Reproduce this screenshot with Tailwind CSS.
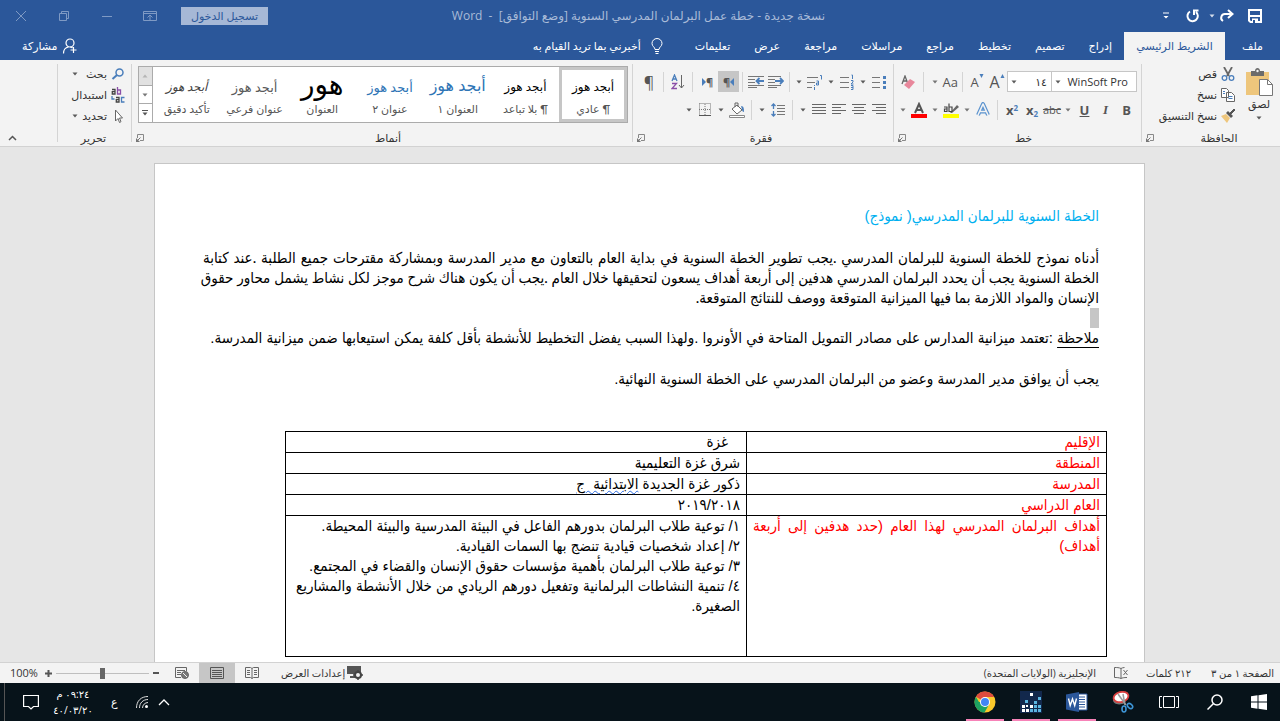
<!DOCTYPE html>
<html lang="ar" dir="rtl">
<head>
  <meta charset="UTF-8">
  <title>نسخة جديدة - Word</title>
  <script src="https://cdn.jsdelivr.net/npm/@tailwindcss/browser@4"></script>
</head>
<body class="h-screen flex flex-col overflow-hidden bg-[#e6e6e6] text-[#333] text-[11px] leading-4 font-['Open_Sans','DejaVu_Sans',sans-serif]">

  <!-- shared icons -->
  <svg class="hidden">
    <symbol id="caret" viewBox="0 0 6 4"><path d="M0.5 0.5h5L3 3.5z" fill="currentColor" opacity=".8"/></symbol>
    <symbol id="launcher" viewBox="0 0 8 8"><path d="M1.500 4V.5h6v6H4" fill="none" stroke="#888"/><path d="M0 4v4h4z" fill="#777"/><path d="M1.500 6.500l3-3" stroke="#777"/></symbol>
  </svg>

  <!-- Title bar -->
  <header class="bg-[#2b579a] text-white shrink-0">
    <div class="h-8 flex items-center">
      <div class="flex items-center flex-1 pr-[17px]">
        <button aria-label="حفظ"><svg class="w-4 h-4" viewBox="0 0 16 16"><path d="M2 2h12v12H3.500L2 12.500z" fill="none" stroke="#fff" stroke-width="2"/><path d="M2 8h12" stroke="#fff" stroke-width="2"/><path d="M5 10.500h6V15H5z" fill="#fff"/><path d="M6 12h2v3H6z" fill="#2b579a"/></svg></button>
        <button class="mr-3" aria-label="تكرار"><svg class="w-4 h-4" viewBox="0 0 16 16" fill="none" stroke="#fff" stroke-width="2"><path d="M13 6H6.500a3.800 3.800 0 0 0-2.500 7M9 2l4.500 4L9 10"/></svg></button>
        <button class="mr-1" aria-label="خيارات"><svg class="w-[6px] h-1"><use href="#caret"/></svg></button>
        <button class="mr-2" aria-label="تراجع"><svg class="w-4 h-4" viewBox="0 0 16 16" fill="none" stroke="#fff" stroke-width="2"><path d="M11 4a5.200 5.200 0 1 1-6-.5M13.500 2.500H9V7"/></svg></button>
        <button class="mr-4" aria-label="تخصيص"><svg class="w-[6px] h-2" viewBox="0 0 6 8"><path d="M0 1h6" stroke="#fff"/><path d="M.5 4h5L3 6.500z" fill="#fff"/></svg></button>
      </div>
      <h1 class="text-[#a9bbd8] text-xs whitespace-nowrap">نسخة جديدة - خطة عمل البرلمان المدرسي السنوية [وضع التوافق] &nbsp;- &nbsp;Word</h1>
      <div class="flex items-center justify-end flex-1 pl-[14px] text-[#7f9ac4]">
        <button class="bg-[#a6b8d6] text-[#2b579a] w-[87px] h-[18px] leading-4">تسجيل الدخول</button>
        <button class="mr-6" aria-label="خيارات عرض الشريط"><svg class="w-[14px] h-3" viewBox="0 0 14 12" fill="none" stroke="currentColor"><path d="M.5 1.500h13v9H.5zM.5 3.500h13M7 10V5M4.500 7.500L7 5l2.500 2.500"/></svg></button>
        <button class="mr-[29px]" aria-label="تصغير"><svg class="w-[14px] h-3" viewBox="0 0 14 12" stroke="currentColor"><path d="M2 6.500h10"/></svg></button>
        <button class="mr-[29px]" aria-label="استعادة"><svg class="w-[14px] h-3" viewBox="0 0 14 12" fill="none" stroke="currentColor"><path d="M2.500 3.500h7v7h-7zM4.500 3.500v-2h7v7h-2"/></svg></button>
        <button class="mr-[29px]" aria-label="إغلاق"><svg class="w-[14px] h-3" viewBox="0 0 14 12" stroke="currentColor"><path d="M2 1l10 10M12 1L2 11"/></svg></button>
      </div>
    </div>
    <nav class="h-7 flex items-stretch">
      <a href="#" class="w-[55px] flex items-center justify-center">ملف</a>
      <a href="#" class="w-[101px] flex items-center justify-center bg-[#f3f3f3] text-[#2b579a]">الشريط الرئيسي</a>
      <a href="#" class="px-3 flex items-center">إدراج</a>
      <a href="#" class="px-3 flex items-center">تصميم</a>
      <a href="#" class="px-3 flex items-center">تخطيط</a>
      <a href="#" class="px-3 flex items-center">مراجع</a>
      <a href="#" class="px-3 flex items-center">مراسلات</a>
      <a href="#" class="px-3 flex items-center">مراجعة</a>
      <a href="#" class="px-3 flex items-center">عرض</a>
      <a href="#" class="px-3 flex items-center">تعليمات</a>
      <button class="mr-5 flex items-center gap-[10px]">
        <svg class="w-3 h-4" viewBox="0 0 12 16" fill="none" stroke="#fff"><path d="M4 11.500C4 9 1 8.500 1 5.500a5 5 0 0 1 10 0c0 3-3 3.500-3 6zM4 13.500h4M4.500 15.500h3"/></svg>
        أخبرني بما تريد القيام به
      </button>
      <button class="mr-auto ml-[22px] flex items-center gap-1">
        <svg class="w-4 h-4" viewBox="0 0 16 16" fill="none" stroke="#fff" stroke-width="1.200"><circle cx="8" cy="5" r="4"/><path d="M1.500 15.500c0-3.500 2-6 5-6.500M8 9c1 0 2 .5 2.500 1M11.500 9v6M8.500 12h6"/></svg>
        مشاركة
      </button>
    </nav>
  </header>

  <!-- Ribbon -->
  <section class="h-[87px] shrink-0 flex bg-[#f3f3f3] border-b border-[#d2d2d2] pt-1 pb-1">
    <!-- Clipboard -->
    <div class="w-[139px] border-l border-[#d4d4d4] flex flex-col pr-[6px]">
      <div class="flex flex-1">
        <button class="flex flex-col items-center w-[30px] pt-1">
          <svg class="w-7 h-7 shrink-0" viewBox="0 0 28 28"><path d="M1 4h23v23H1z" fill="#eec67c"/><path d="M6 3h4c0-4 5-4 5 0h4v5H6z" fill="#6b6b6b"/><circle cx="12.500" cy="3" r="1.200" fill="#f3f3f3"/><path d="M14.500 11.500h8l5 5v11h-13z" fill="#fff" stroke="#777"/><path d="M22.500 11.500v5h5" fill="none" stroke="#777"/></svg>
          <span>لصق</span>
          <svg class="w-[6px] h-1 mt-1"><use href="#caret"/></svg>
        </button>
        <div class="flex flex-col gap-[5px] pt-[2px] mr-[9px]">
          <button class="flex items-center gap-1 h-4"><svg class="w-[14px] h-[14px] shrink-0" viewBox="0 0 14 14" fill="none"><path d="M3 0l5 9M11 0L6 9" stroke="#666" stroke-width="1.800"/><circle cx="3.500" cy="11" r="2.300" stroke="#4a7ebb" stroke-width="1.300"/><circle cx="10.500" cy="11" r="2.300" stroke="#4a7ebb" stroke-width="1.300"/></svg>قص</button>
          <button class="flex items-center gap-1 h-4"><svg class="w-[14px] h-[14px] shrink-0" viewBox="0 0 14 14" fill="#fff" stroke="#666"><path d="M.5.5h5l2 2v7h-7zM5.500 4.500h5l3 3v6h-8z"/><path d="M2 3.500h2M2 5.500h2M7.500 8.500h4M7.500 10.500h4" stroke="#4a7ebb"/></svg>نسخ</button>
          <button class="flex items-center gap-1 h-4 whitespace-nowrap"><svg class="w-[14px] h-[14px] shrink-0" viewBox="0 0 14 14"><path d="M0 7l5-2 4 4-3 5z" fill="#eec67c"/><path d="M5 4l5 5 2-2-5-5z" fill="#555"/><path d="M9 4l4-4 1 1-4 4z" fill="#555" stroke="#555"/></svg>نسخ التنسيق</button>
        </div>
      </div>
      <div class="relative flex justify-center h-4 -mb-1 pl-[22px]">الحافظة
        <svg class="absolute left-1 top-1 w-2 h-2"><use href="#launcher"/></svg></div>
    </div>

    <!-- Font -->
    <div class="w-[248px] border-l border-[#d4d4d4] flex flex-col pr-1">
      <div class="flex-1 flex flex-col gap-2 pt-[7px]">
        <div class="flex items-center h-[21px]">
          <label class="relative"><select aria-label="الخط" class="appearance-none block w-[86px] h-[21px] bg-white border border-[#c6c6c6] pr-2 text-[11px] leading-4"><option>WinSoft Pro</option></select><svg class="absolute left-1 top-[9px] w-[6px] h-1"><use href="#caret"/></svg></label>
          <label class="relative"><select aria-label="حجم الخط" class="appearance-none block w-[44px] h-[21px] bg-white border border-r-0 border-[#c6c6c6] pr-1 text-[11px] leading-4"><option>١٤</option></select><svg class="absolute left-1 top-[9px] w-[6px] h-1"><use href="#caret"/></svg></label>
          <button class="w-5 flex justify-center items-start text-base leading-4 text-[#555]" dir="ltr">A<svg class="w-[5px] h-1" viewBox="0 0 4 4"><path d="M0 4h4L2 0z" fill="#4a7ebb"/></svg></button>
          <button class="w-5 flex justify-center items-start text-[13px] leading-4 text-[#555]" dir="ltr">A<svg class="w-[5px] h-1" viewBox="0 0 4 4"><path d="M0 0h4L2 4z" fill="#4a7ebb"/></svg></button>
          <span class="w-px h-5 bg-[#d4d4d4] mx-1"></span>
          <button class="flex items-center gap-[5px] text-[13px] text-[#555]">Aa<svg class="w-[6px] h-1"><use href="#caret"/></svg></button>
          <span class="w-px h-5 bg-[#d4d4d4] mx-2"></span>
          <button aria-label="مسح التنسيق"><svg class="w-[14px] h-[14px]" viewBox="0 0 14 14"><path d="M1 9L4 1l3 8M2 6h4" fill="none" stroke="#666" stroke-width="1.300"/><path d="M3 10l6-6 5 3-6 7z" fill="#e8879b"/></svg></button>
        </div>
        <div class="flex items-center h-5 text-[13px] text-[#555]">
          <button class="w-[21px] font-bold">B</button>
          <button class="w-[21px] italic font-bold font-['Liberation_Serif',serif]">I</button>
          <button class="w-[21px] font-bold underline">U</button>
          <button class="w-3 flex justify-center" aria-label="تسطير"><svg class="w-[6px] h-1"><use href="#caret"/></svg></button>
          <button class="w-5 text-[11px] line-through">abc</button>
          <button class="w-5 font-bold" dir="ltr">x<sub class="text-[8px] text-[#4a7ebb]">2</sub></button>
          <button class="w-5 font-bold" dir="ltr">x<sup class="text-[8px] text-[#4a7ebb]">2</sup></button>
          <span class="w-px h-5 bg-[#d4d4d4] mx-1"></span>
          <button class="w-5 flex justify-center" aria-label="تأثيرات النص"><svg class="w-4 h-4" viewBox="0 0 16 16" fill="none" stroke-linejoin="round"><path d="M3 13L8 2l5 11M5 9.500h6" stroke="#5b93cf" stroke-width="4"/><path d="M3 13L8 2l5 11M5 9.500h6" stroke="#f3f3f3" stroke-width="1.600"/></svg></button>
          <button class="w-3 flex justify-center" aria-label="تأثيرات"><svg class="w-[6px] h-1"><use href="#caret"/></svg></button>
          <button class="w-5 flex justify-center" aria-label="تمييز"><svg class="w-4 h-4" viewBox="0 0 16 16"><path d="M0 12h16v4H0z" fill="#ff0"/><path d="M7 11l7-8 2 2-7 6z" fill="#666"/><path d="M1 5h3v4.500H1.500V7H4M6 1.500v8h3V5H6" fill="none" stroke="#444" stroke-width="1.200"/></svg></button>
          <button class="w-3 flex justify-center" aria-label="لون التمييز"><svg class="w-[6px] h-1"><use href="#caret"/></svg></button>
          <button class="w-5 flex justify-center" aria-label="لون الخط"><svg class="w-4 h-4" viewBox="0 0 16 16"><path d="M0 12h16v4H0z" fill="#f00"/><path d="M4 11l4-9 4 9M5.500 8h5" fill="none" stroke="#555" stroke-width="2"/></svg></button>
          <button class="w-3 flex justify-center" aria-label="ألوان الخط"><svg class="w-[6px] h-1"><use href="#caret"/></svg></button>
        </div>
      </div>
      <div class="relative flex justify-center h-4 -mb-1 pl-4">خط
        <svg class="absolute left-1 top-1 w-2 h-2"><use href="#launcher"/></svg></div>
    </div>

    <!-- Paragraph -->
    <div class="w-[261px] border-l border-[#d4d4d4] flex flex-col pr-1">
      <div class="flex-1 flex flex-col gap-2 pt-[7px]">
        <div class="flex items-center h-[21px]">
          <button class="w-5 flex justify-center" aria-label="تعداد نقطي"><svg class="w-[14px] h-[14px]" viewBox="0 0 14 14"><path d="M0 2.500h8M0 7.500h8M0 12.500h8" stroke="#777"/><path d="M11 1h3v3h-3zM11 6h3v3h-3zM11 11h3v3h-3z" fill="#4a7ebb"/></svg></button>
          <button class="w-3 flex justify-center" aria-label="نقاط"><svg class="w-[6px] h-1"><use href="#caret"/></svg></button>
          <button class="w-5 flex justify-center" aria-label="تعداد رقمي"><svg class="w-[14px] h-4" viewBox="0 0 14 16"><path d="M0 3.500h9M0 8.500h9M0 13.500h9" stroke="#777"/><path d="M11.500 1h1v4M11 6.500h2v1.500l-2 2h2.500M11 11.500h2v4h-2M11 13.500h2" stroke="#4a7ebb" fill="none"/></svg></button>
          <button class="w-3 flex justify-center" aria-label="أرقام"><svg class="w-[6px] h-1"><use href="#caret"/></svg></button>
          <button class="w-5 flex justify-center" aria-label="قائمة متعددة المستويات"><svg class="w-4 h-4" viewBox="0 0 16 16"><path d="M0 3.500h11M0 8.500h8M0 13.500h5" stroke="#777"/><path d="M13 1.500h1.500v4M9.500 7h2v4h-2V9h2M7.500 11v1M7.500 13v3" stroke="#4a7ebb" fill="none"/></svg></button>
          <button class="w-3 flex justify-center" aria-label="مستويات"><svg class="w-[6px] h-1"><use href="#caret"/></svg></button>
          <span class="w-px h-5 bg-[#d4d4d4] mx-[3px]"></span>
          <button class="w-5 flex justify-center" aria-label="زيادة المسافة"><svg class="w-4 h-3" viewBox="0 0 16 12"><path d="M0 .5h13M0 3.500h7M0 6.500h7M0 9.500h13M0 11.500h9" stroke="#777"/><path d="M7 5h8M12 2l3 3-3 3" stroke="#4a7ebb" stroke-width="1.800" fill="none"/></svg></button>
          <button class="w-5 flex justify-center" aria-label="إنقاص المسافة"><svg class="w-4 h-3" viewBox="0 0 16 12"><path d="M0 .5h16M0 3.500h7M0 6.500h7M0 9.500h16M0 11.500h9" stroke="#777"/><path d="M8 5h8M11.500 2l-3 3 3 3" stroke="#4a7ebb" stroke-width="1.800" fill="none"/></svg></button>
          <span class="w-px h-5 bg-[#d4d4d4] mx-[3px]"></span>
          <button class="w-[21px] h-[21px] bg-[#c6c6c6] flex justify-center items-center text-[#555] font-bold" aria-label="من اليمين إلى اليسار"><svg class="w-1 h-2" viewBox="0 0 4 8"><path d="M4 0v8L0 4z" fill="#4a7ebb"/></svg>¶</button>
          <button class="w-[21px] h-[21px] flex justify-center items-center text-[#555] font-bold" aria-label="من اليسار إلى اليمين">¶<svg class="w-1 h-2" viewBox="0 0 4 8"><path d="M0 0v8l4-4z" fill="#4a7ebb"/></svg></button>
          <span class="w-px h-5 bg-[#d4d4d4] mx-1"></span>
          <button class="w-5 flex justify-center" aria-label="فرز"><svg class="w-[14px] h-4" viewBox="0 0 14 16" fill="none"><path d="M1 7l2.500-6L6 7M2 5h3" stroke="#4a7ebb" stroke-width="1.300"/><path d="M1 9.500h4.500l-4.500 5h5" stroke="#8a4fa8" stroke-width="1.300"/><path d="M10.500 1v13M8 11l2.500 3 2.500-3" stroke="#666"/></svg></button>
          <span class="w-px h-5 bg-[#d4d4d4] mx-1"></span>
          <button class="w-5 text-base leading-4 text-[#555]">¶</button>
        </div>
        <div class="flex items-center h-5">
          <button class="w-5 flex justify-center" aria-label="محاذاة لليمين"><svg class="w-[14px] h-3" viewBox="0 0 14 12" stroke="#666"><path d="M0 .5h14M4 3.500h10M0 6.500h14M4 9.500h10"/></svg></button>
          <button class="w-5 flex justify-center" aria-label="توسيط"><svg class="w-[14px] h-3" viewBox="0 0 14 12" stroke="#666"><path d="M0 .5h14M2 3.500h10M0 6.500h14M2 9.500h10"/></svg></button>
          <button class="w-5 flex justify-center" aria-label="محاذاة لليسار"><svg class="w-[14px] h-3" viewBox="0 0 14 12" stroke="#666"><path d="M0 .5h14M0 3.500h9M0 6.500h14M0 9.500h9"/></svg></button>
          <button class="w-5 flex justify-center" aria-label="ضبط"><svg class="w-[14px] h-3" viewBox="0 0 14 12" stroke="#666"><path d="M0 .5h14M0 3.500h14M0 6.500h14M0 9.500h14"/></svg></button>
          <button class="w-3 flex justify-center" aria-label="ضبط النص"><svg class="w-[6px] h-1"><use href="#caret"/></svg></button>
          <span class="w-px h-5 bg-[#d4d4d4] mx-1"></span>
          <button class="w-5 flex justify-center" aria-label="تباعد الأسطر"><svg class="w-[14px] h-[14px]" viewBox="0 0 14 14" fill="none"><path d="M6 2.500h8M6 5.500h8M6 8.500h8M6 11.500h8" stroke="#777"/><path d="M2.500 1v5M2.500 8v5M.5 3l2-2 2 2M.5 11l2 2 2-2" stroke="#4a7ebb" stroke-width="1.300"/></svg></button>
          <button class="w-3 flex justify-center" aria-label="تباعد"><svg class="w-[6px] h-1"><use href="#caret"/></svg></button>
          <span class="w-px h-5 bg-[#d4d4d4] mx-1"></span>
          <button class="w-5 flex justify-center" aria-label="تظليل"><svg class="w-4 h-4" viewBox="0 0 16 16"><path d="M.5 13.500h15v2H.5z" fill="#fff" stroke="#888"/><path d="M3 7l5-4 5 5-5 4z" fill="#fff" stroke="#666"/><path d="M6 5V1h3v4" fill="none" stroke="#666"/><path d="M12 4c3 0 3 3 3 6-2 0-2-3-3-6z" fill="#4a7ebb"/></svg></button>
          <button class="w-3 flex justify-center" aria-label="لون التظليل"><svg class="w-[6px] h-1"><use href="#caret"/></svg></button>
          <button class="w-5 flex justify-center" aria-label="حدود"><svg class="w-[14px] h-[14px]" viewBox="0 0 14 14" fill="none" stroke="#777"><path d="M1.500.5h11v11M1.500.5v11M7 1v11M1 6.500h12" stroke-dasharray="1 1"/><path d="M1 12.500h12" stroke="#555"/></svg></button>
          <button class="w-3 flex justify-center" aria-label="أنواع الحدود"><svg class="w-[6px] h-1"><use href="#caret"/></svg></button>
        </div>
      </div>
      <div class="relative flex justify-center h-4 -mb-1">فقرة
        <svg class="absolute left-1 top-1 w-2 h-2"><use href="#launcher"/></svg></div>
    </div>

    <!-- Styles -->
    <div class="flex-1 border-l border-[#d4d4d4] flex flex-col pr-1">
      <div class="flex-1 pt-[2px] pl-[6px]">
        <div class="h-[57px] flex bg-white border border-[#ababab] text-[#555] font-['Lato','DejaVu_Sans',sans-serif]">
          <button class="flex-1 basis-0 border-3 border-[#c6c6c6]"><span class="block h-6 leading-7 text-black text-[12px]">أبجد هوز</span><span class="block mt-1">¶ عادي</span></button>
          <button class="flex-1 basis-0 border-3 border-transparent"><span class="block h-6 leading-7 text-black text-[12px]">أبجد هوز</span><span class="block mt-1">¶ بلا تباعد</span></button>
          <button class="flex-1 basis-0 border-3 border-transparent"><span class="block h-6 leading-6 text-[#2e74b5] text-[16px]">أبجد هوز</span><span class="block mt-1">العنوان ١</span></button>
          <button class="flex-1 basis-0 border-3 border-transparent"><span class="block h-6 leading-7 text-[#2e74b5] text-[13px]">أبجد هوز</span><span class="block mt-1">عنوان ٢</span></button>
          <button class="flex-1 basis-0 border-3 border-transparent"><span class="block h-6 leading-5 text-black text-[28px]">هور</span><span class="block mt-1">العنوان</span></button>
          <button class="flex-1 basis-0 border-3 border-transparent"><span class="block h-6 leading-7 text-[#5a5a5a] text-[13px]">أبجد هوز</span><span class="block mt-1">عنوان فرعي</span></button>
          <button class="flex-1 basis-0 border-3 border-transparent"><span class="block h-6 leading-7 italic text-[#404040] text-[12px]">أبجد هوز</span><span class="block mt-1">تأكيد دقيق</span></button>
          <div class="w-[14px] flex flex-col border-r border-[#ababab] divide-y divide-[#ababab]">
            <button class="flex-1 flex items-center justify-center bg-[#e1e1e1] text-[#aaa]" aria-label="أعلى"><svg class="w-[6px] h-1 rotate-180"><use href="#caret"/></svg></button>
            <button class="flex-1 flex items-center justify-center" aria-label="أسفل"><svg class="w-[6px] h-1"><use href="#caret"/></svg></button>
            <button class="flex-1 flex items-center justify-center" aria-label="المزيد"><svg class="w-[6px] h-[6px]" viewBox="0 0 6 6"><path d="M0 .5h6" stroke="#555"/><path d="M.5 2.500h5L3 5.500z" fill="#555"/></svg></button>
          </div>
        </div>
      </div>
      <div class="relative flex justify-center h-4 -mb-1 pl-4">أنماط
        <svg class="absolute left-1 top-1 w-2 h-2"><use href="#launcher"/></svg></div>
    </div>

    <!-- Editing -->
    <div class="w-[74px] border-l border-[#d4d4d4] flex flex-col pr-[6px]">
      <div class="flex-1 flex flex-col gap-[5px] pt-[2px]">
        <button class="flex items-center gap-1 h-4"><svg class="w-[14px] h-3 shrink-0" viewBox="0 0 14 12" fill="none" stroke="#4a7ebb"><circle cx="8.500" cy="4.500" r="3.500" stroke-width="1.500"/><path d="M6 7l-4.500 4" stroke-width="2"/></svg>بحث<svg class="w-[6px] h-1 mr-1"><use href="#caret"/></svg></button>
        <button class="flex items-center gap-1 h-4"><svg class="w-[14px] h-4 shrink-0" viewBox="0 0 14 16" fill="none" stroke-width="1.300"><path d="M1 2.500h3v4.500H1.300V4.700H4" stroke="#444"/><path d="M6.500 0v7h3V3h-3" stroke="#8a4fa8"/><path d="M5 10.500h3v4.500H5.300v-2.300H8" stroke="#444"/><path d="M13.500 10.500h-3V15h3M1 9v3h2.500" stroke="#4a7ebb"/></svg>استبدال</button>
        <button class="flex items-center gap-1 h-4"><svg class="w-[14px] h-[14px] shrink-0" viewBox="0 0 14 14"><path d="M4.500 1v11l2.500-2.500 1.500 4 1.500-.8-1.500-3.700h3z" fill="#fff" stroke="#666"/></svg>تحديد<svg class="w-[6px] h-1"><use href="#caret"/></svg></button>
      </div>
      <div class="text-center h-4 -mb-1 pl-1">تحرير</div>
    </div>
    <div class="w-[57px] flex items-end pb-px pl-2">
      <button class="mr-auto" aria-label="طي الشريط"><svg class="w-[9px] h-[6px]" viewBox="0 0 9 6"><path d="M1 5l3.500-3.500L8 5" fill="none" stroke="#555" stroke-width="1.500"/></svg></button>
    </div>
  </section>

  <!-- Document -->
  <main class="flex-1 min-h-0 overflow-hidden pt-4 pl-[154px] pr-[135px]">
    <article class="min-h-full bg-white border border-b-0 border-[#c6c6c6] pt-[42px] pr-[45px] pl-12 text-black text-[15px] leading-5 font-['Liberation_Sans','DejaVu_Sans_Condensed','DejaVu_Sans',sans-serif]">
      <h2 class="text-[#00b0f0] mb-[21px]">الخطة السنوية للبرلمان المدرسي( نموذج)</h2>
      <p class="font-['Lato','DejaVu_Sans_Condensed','DejaVu_Sans',sans-serif]">
        <span class="block text-justify [text-align-last:justify]">أدناه نموذج للخطة السنوية للبرلمان المدرسي .يجب تطوير الخطة السنوية في بداية العام بالتعاون مع مدير المدرسة وبمشاركة مقترحات جميع الطلبة .عند كتابة</span>
        <span class="block text-justify [text-align-last:justify] whitespace-nowrap">الخطة السنوية يجب أن يحدد البرلمان المدرسي هدفين إلى أربعة أهداف يسعون لتحقيقها خلال العام .يجب أن يكون هناك شرح موجز لكل نشاط يشمل محاور حقوق</span>
        الإنسان والمواد اللازمة بما فيها الميزانية المتوقعة ووصف للنتائج المتوقعة.</p>
      <div class="mt-px w-[9px] h-5 bg-[#c6c6c6]"></div>
      <p class="mb-[21px]"><u class="underline-offset-4">ملاحظة</u> :تعتمد ميزانية المدارس على مصادر التمويل المتاحة في الأونروا .ولهذا السبب يفضل التخطيط للأنشطة بأقل كلفة يمكن استيعابها ضمن ميزانية المدرسة.</p>
      <p>يجب أن يوافق مدير المدرسة وعضو من البرلمان المدرسي على الخطة السنوية النهائية.</p>
      <div class="mt-[42px] -mr-2 ml-[82px]">
        <table class="w-full table-fixed border-collapse [&_td]:border [&_td]:border-black [&_td]:px-[6px] [&_td]:align-top [&_th]:border [&_th]:border-black [&_th]:px-[6px] [&_th]:align-top [&_th]:text-justify [&_th]:font-normal [&_th]:text-[#f00]">
          <tr><th class="w-[360px]">الإقليم</th><td class="indent-3">غزة</td></tr>
          <tr><th>المنطقة</th><td>شرق غزة التعليمية</td></tr>
          <tr><th>المدرسة</th><td>ذكور غزة الجديدة <span class="underline decoration-wavy decoration-[#2b6be0] decoration-1">الابتدائية &nbsp;ج</span></td></tr>
          <tr><th>العام الدراسي</th><td>٢٠١٩/٢٠١٨</td></tr>
          <tr class="h-[141px]"><th>أهداف البرلمان المدرسي لهذا العام (حدد هدفين إلى أربعة أهداف)</th>
            <td>١/ توعية طلاب البرلمان بدورهم الفاعل في البيئة المدرسية والبيئة المحيطة.<br>٢/ إعداد شخصيات قيادية تنضج بها السمات القيادية.<br>٣/ توعية طلاب البرلمان بأهمية مؤسسات حقوق الإنسان والقضاء في المجتمع.<br>٤/ تنمية النشاطات البرلمانية وتفعيل دورهم الريادي من خلال الأنشطة والمشاريع الصغيرة.</td></tr>
        </table>
      </div>
    </article>
  </main>

  <!-- Status bar -->
  <section class="h-[21px] shrink-0 flex items-center bg-[#f3f3f3] border-t border-[#d2d2d2] pr-[6px] pl-[10px] text-[10px] whitespace-nowrap">
    <span>الصفحة ١ من ٣</span>
    <span class="mr-5">٢١٢ كلمات</span>
    <svg class="w-[14px] h-3 mr-[18px]" viewBox="0 0 14 12" fill="none" stroke="#666"><path d="M7 1.500v10M7 1.500C5 .5 3 .5.500.5v10c2 0 4.500 0 6.500 1 1-.6 3-1 6-1M7 1.500c1-.5 2-1 3.500-1M9.500 3l4 5M13.500 3l-4 5"/></svg>
    <span class="mr-[18px]">الإنجليزية (الولايات المتحدة)</span>
    <button class="mr-auto flex items-center gap-[2px]"><svg class="w-4 h-[14px]" viewBox="0 0 16 14"><path d="M0 0h14v8H0zM3 10h5v2H3z" fill="#555"/><circle cx="11" cy="9" r="3" fill="#f3f3f3" stroke="#444" stroke-width="2"/><path d="M11 4v2M11 12v2M6 9h2M14 9h2" stroke="#444" stroke-width="1.500"/></svg>إعدادات العرض</button>
    <button class="mr-[22px]" aria-label="وضع القراءة"><svg class="w-[14px] h-3" viewBox="0 0 14 12" fill="none" stroke="#666"><path d="M.5.5h5L7 1.500 8.500.5h5v10h-5L7 11.500l-1.500-1h-5zM7 1.500v10M2 3.500h3M2 5.500h3M2 7.500h3M9 3.500h3M9 5.500h3M9 7.500h3"/></svg></button>
    <button class="mr-[10px] w-9 h-5 bg-[#c6c6c6] flex items-center justify-center" aria-label="تخطيط الطباعة"><svg class="w-[14px] h-3" viewBox="0 0 14 12" fill="none" stroke="#555"><path d="M.5.5h13v11H.5zM2 3.500h10M2 5.500h10M2 7.500h10M2 9.500h10"/></svg></button>
    <button class="mr-[10px]" aria-label="تخطيط ويب"><svg class="w-[14px] h-3" viewBox="0 0 14 12" fill="none" stroke="#666"><path d="M6 10.500H.5V.5h11v4M2 3.500h8M2 5.500h4M2 7.500h4"/><circle cx="10" cy="8" r="3.500" fill="#777"/><path d="M8 6l4 4" stroke="#f3f3f3"/></svg></button>
    <button class="mr-4" aria-label="تصغير"><svg class="w-[6px] h-[6px]" viewBox="0 0 6 6"><path d="M0 3h6" stroke="#555" stroke-width="2"/></svg></button>
    <input type="range" aria-label="تكبير/تصغير" value="50" class="mx-1 w-[93px] h-3 appearance-none bg-linear-to-b from-transparent from-50% via-[#999] via-50% to-transparent to-60% [&::-webkit-slider-thumb]:appearance-none [&::-webkit-slider-thumb]:w-[5px] [&::-webkit-slider-thumb]:h-[11px] [&::-webkit-slider-thumb]:bg-[#666]">
    <button aria-label="تكبير"><svg class="w-[7px] h-[7px]" viewBox="0 0 7 7"><path d="M0 3.500h7M3.500 0v7" stroke="#555" stroke-width="2"/></svg></button>
    <span class="mr-[7px] text-[11px]" dir="ltr">100%</span>
  </section>

  <!-- Taskbar -->
  <footer class="h-[38px] shrink-0 flex items-stretch bg-[#07131a] text-white [&_button]:flex [&_button]:items-center [&_button]:justify-center">
    <button class="w-[42px]" aria-label="ابدأ"><svg class="w-4 h-4" viewBox="0 0 16 16" fill="#fff"><path d="M0 2.300l6.500-1v6.200H0zM7.500 1.200L16 0v7.500H7.500zM0 8.500h6.500v6.200L0 13.700zM7.500 8.500H16V16l-8.500-1.200z"/></svg></button>
    <button class="w-[46px]" aria-label="بحث"><svg class="w-4 h-4" viewBox="0 0 16 16" fill="none" stroke="#fff" stroke-width="1.500"><circle cx="10" cy="6" r="5"/><path d="M6.500 9.500L.5 15.500"/></svg></button>
    <button class="w-[46px]" aria-label="عرض المهام"><svg class="w-5 h-4" viewBox="0 0 20 16" fill="none" stroke="#fff"><path d="M4.500 2.500h11v11h-11zM3 2.500H.5v11H3M17 2.500h2.500v11H17"/></svg></button>
    <button class="w-[46px]" aria-label="أداة القطع"><svg class="w-[22px] h-[22px]" viewBox="0 0 22 22" fill="none"><path d="M1 9c0 4 6 6 12 3l2-6z" fill="#777"/><ellipse cx="9" cy="6" rx="7.500" ry="5" fill="#fff" stroke="#d94040" stroke-width="1.800" transform="rotate(-15 9 6)"/><path d="M6 3l8 11M11 3l2 11" stroke="#999" stroke-width="1.500"/><ellipse cx="12" cy="18" rx="2" ry="3" stroke="#3d95d6" stroke-width="1.600"/><ellipse cx="18" cy="15" rx="3" ry="2" stroke="#3d95d6" stroke-width="1.600" transform="rotate(40 18 15)"/></svg></button>
    <button class="w-[46px] relative" aria-label="Word"><svg class="w-[22px] h-5" viewBox="0 0 22 20"><path d="M11 2h10v16H11z" fill="#fff" stroke="#2b579a"/><path d="M13 5h6M13 7.500h6M13 10h6M13 12.500h6M13 15h6" stroke="#2b579a"/><path d="M0 2.500L13 0v20L0 17.500z" fill="#2b579a"/><path d="M2.500 6.500l1.700 7L6.500 7l2.200 6.500 1.800-7" fill="none" stroke="#fff" stroke-width="1.400"/></svg><span class="absolute bottom-0 inset-x-1 h-[2px] bg-[#f783b8]"></span></button>
    <button class="w-[46px] relative" aria-label="تطبيق"><svg class="w-[22px] h-[22px]" viewBox="0 0 22 22"><path d="M0 0h22v22H0z" fill="#12284c"/><path d="M10 2h3v3h-3zM2 14h3v3H2zM6 14h2v2H6zM2 18h3v3H2zM6 18h3v3H6zM10 14h3v3h-3z" fill="#fff"/><path d="M5 9h3v3H5zM14 10h3v3h-3zM18 6h3v3h-3zM10 18h3v3h-3zM14 14h3v3h-3zM14 18h3v3h-3zM18 14h3v3h-3zM18 18h3v3h-3z" fill="#5ab4e0"/></svg><span class="absolute bottom-0 inset-x-1 h-[2px] bg-[#f783b8]"></span></button>
    <button class="w-[46px] relative" aria-label="Chrome"><svg class="w-[22px] h-[22px]" viewBox="0 0 22 22"><circle cx="11" cy="11" r="10.500" fill="#fbc92b"/><path d="M11 11L1.900 5.700A10.500 10.500 0 0 1 20.300 6H11z" fill="#dd4b3e"/><path d="M1.900 5.700A10.500 10.500 0 0 0 10.500 21.500L15 13.500 11 11H5z" fill="#1da362"/><circle cx="11" cy="11" r="5" fill="#fff"/><circle cx="11" cy="11" r="4" fill="#4286f4"/></svg><span class="absolute bottom-0 inset-x-1 h-[2px] bg-[#f783b8]"></span></button>
    <div class="mr-auto flex items-center pl-[18px]">
      <button aria-label="الرموز المخفية"><svg class="w-3 h-2" viewBox="0 0 12 8" fill="none" stroke="#fff" stroke-width="1.300"><path d="M1 7l5-5 5 5"/></svg></button>
      <svg class="w-3 h-3 mr-[10px]" viewBox="0 0 12 12" fill="none" stroke="#ddd"><path d="M.5 12C.5 5 5 .5 12 .5M3.500 12c0-5 3.500-8.500 8.500-8.500M6.500 12c0-3 2.500-5.500 5.500-5.500"/><circle cx="10.500" cy="10.500" r="1.500" fill="#fff" stroke="none"/></svg>
      <span class="mr-[18px]">ع</span>
      <div class="mr-[18px] w-10 text-center text-[10px] leading-4"><div>٠٩:٢٤ م</div><div dir="ltr">٤٠/٠٣/٢٠</div></div>
      <button class="mr-[14px]" aria-label="الإشعارات"><svg class="w-4 h-4" viewBox="0 0 16 16" fill="none" stroke="#fff" stroke-width="1.200"><path d="M.6 1.500h14.800v11h-4.900L8 15l-2.500-2.500H.6z"/></svg></button>
    </div>
    <div class="w-px bg-[#555] ml-1"></div>
  </footer>
</body>
</html>
